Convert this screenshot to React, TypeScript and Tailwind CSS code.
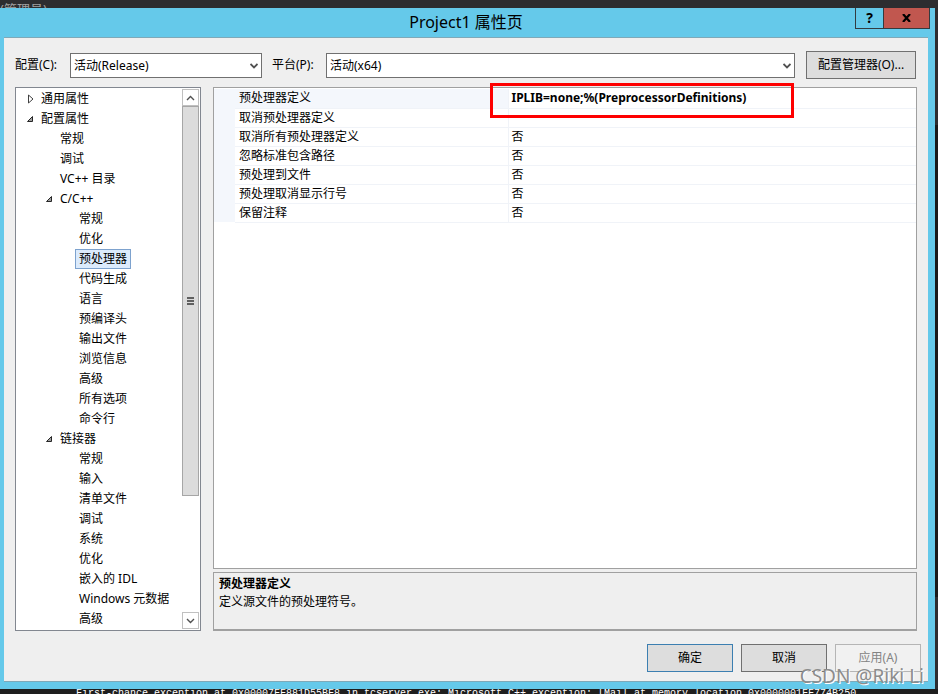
import { useState } from "react";

type Node = { label: string; level: number; state?: "open" | "closed" };

const tree: Node[] = [
  { label: "通用属性", level: 0, state: "closed" },
  { label: "配置属性", level: 0, state: "open" },
  { label: "常规", level: 1 },
  { label: "调试", level: 1 },
  { label: "VC++ 目录", level: 1 },
  { label: "C/C++", level: 1, state: "open" },
  { label: "常规", level: 2 },
  { label: "优化", level: 2 },
  { label: "预处理器", level: 2 },
  { label: "代码生成", level: 2 },
  { label: "语言", level: 2 },
  { label: "预编译头", level: 2 },
  { label: "输出文件", level: 2 },
  { label: "浏览信息", level: 2 },
  { label: "高级", level: 2 },
  { label: "所有选项", level: 2 },
  { label: "命令行", level: 2 },
  { label: "链接器", level: 1, state: "open" },
  { label: "常规", level: 2 },
  { label: "输入", level: 2 },
  { label: "清单文件", level: 2 },
  { label: "调试", level: 2 },
  { label: "系统", level: 2 },
  { label: "优化", level: 2 },
  { label: "嵌入的 IDL", level: 2 },
  { label: "Windows 元数据", level: 2 },
  { label: "高级", level: 2 },
];

const indent = ["pl-[6px]", "pl-[25px]", "pl-[44px]"];

const properties = [
  { name: "预处理器定义", value: "IPLIB=none;%(PreprocessorDefinitions)" },
  { name: "取消预处理器定义", value: "" },
  { name: "取消所有预处理器定义", value: "否" },
  { name: "忽略标准包含路径", value: "否" },
  { name: "预处理到文件", value: "否" },
  { name: "预处理取消显示行号", value: "否" },
  { name: "保留注释", value: "否" },
];

function Twisty({ state }: { state?: "open" | "closed" }) {
  return (
    <svg width="14" height="10" viewBox="0 0 14 10" className="shrink-0">
      {state === "closed" && <path d="M5.500 1v8l4.500-4z" fill="#fff" stroke="#404040" />}
      {state === "open" && <path d="M9.500 2.500v5h-5z" fill="#a0a0a0" stroke="#262626" />}
    </svg>
  );
}

function Select({ id, options, className }: { id: string; options: string[]; className: string }) {
  return (
    <div className={`relative h-[25px] ${className}`}>
      <select id={id} className="h-full w-full appearance-none border border-[#707070] bg-white pt-px pl-[3px]">
        {options.map((o) => (
          <option key={o}>{o}</option>
        ))}
      </select>
      <svg width="8" height="6" viewBox="0 0 8 6" className="pointer-events-none absolute top-[10px] right-1">
        <path d="M.5 1 4 4.500 7.500 1" fill="none" stroke="#505050" strokeWidth="1.800" />
      </svg>
    </div>
  );
}

function ScrollBar() {
  return (
    <div className="flex w-[17px] shrink-0 flex-col bg-white">
      <button aria-label="向上滚动" className="flex h-[17px] items-center justify-center border border-[#c0c0c0]">
        <svg width="9" height="6" viewBox="0 0 9 6">
          <path d="M1 5l3.500-3.500L8 5" fill="none" stroke="#505050" strokeWidth="1.400" />
        </svg>
      </button>
      <div className="flex-1">
        <div className="flex h-[77%] flex-col items-center justify-center gap-px border border-[#a6a6a6] bg-[#dcdcdc]">
          <div className="h-[2px] w-[7px] bg-[#606060]" />
          <div className="h-[2px] w-[7px] bg-[#606060]" />
          <div className="h-[2px] w-[7px] bg-[#606060]" />
        </div>
      </div>
      <button aria-label="向下滚动" className="flex h-[17px] items-center justify-center border border-[#c0c0c0]">
        <svg width="9" height="6" viewBox="0 0 9 6">
          <path d="M1 1l3.500 3.500L8 1" fill="none" stroke="#505050" strokeWidth="1.400" />
        </svg>
      </button>
    </div>
  );
}

export default function App() {
  const [selected, setSelected] = useState(8);

  return (
    <div className="relative flex h-screen flex-col overflow-hidden bg-[#2d2d30] font-['Noto_Sans','Noto_Sans_CJK_SC',sans-serif] text-[12px] leading-[18px] text-black">
      <div className="h-2 shrink-0 overflow-hidden text-[13px] text-[#a0a0a0]">(管理员)</div>

      <div className="flex min-h-0 flex-1">
        <div className="flex min-w-0 flex-1 flex-col bg-[#65c9ea] pr-[7px] pb-[7px] pl-1">
          <header className="relative h-[29px] shrink-0 text-center">
            <h1 className="text-[16px] leading-[28px]">Project1 属性页</h1>
            <div className="absolute top-0 -right-[2px] flex h-[21px] border border-t-0 border-[#333b40]">
              <button aria-label="帮助" className="w-[27px] text-[14px] leading-5 font-bold">?</button>
              <button aria-label="关闭" className="flex w-[46px] items-center justify-center border-l border-[#333b40] bg-[#c1574f]">
                <svg width="9" height="8" viewBox="0 0 9 8">
                  <path d="M1 0l7 8M8 0L1 8" stroke="#000" strokeWidth="2.200" />
                </svg>
              </button>
            </div>
          </header>

          <main className="flex min-h-0 flex-1 flex-col border-y border-[#7fa9b8] bg-[#efefef] px-[11px] pt-[13px] pb-[9px]">
            <div className="mr-px flex shrink-0 items-center">
              <label htmlFor="config" className="w-[55px] whitespace-nowrap">配置(C):</label>
              <Select id="config" options={["活动(Release)", "Debug", "Release"]} className="w-[192px]" />
              <label htmlFor="platform" className="ml-[10px] w-[54px] whitespace-nowrap">平台(P):</label>
              <Select id="platform" options={["活动(x64)", "Win32"]} className="flex-1" />
              <button className="ml-[11px] h-7 w-[110px] border border-[#707070] bg-[#dddddd]">配置管理器(O)...</button>
            </div>

            <div className="mt-2 flex min-h-0 flex-1 gap-3">
              <nav className="flex w-[186px] shrink-0 border border-[#828790] bg-white p-px">
                <ul className="min-w-0 flex-1 overflow-hidden">
                  {tree.map((node, i) => (
                    <li key={i} className={`flex h-5 items-center ${indent[node.level]}`}>
                      <Twisty state={node.state} />
                      <button
                        onClick={() => setSelected(i)}
                        className={`h-5 border px-[3px] whitespace-nowrap ${i === selected ? "border-[#7da2ce] bg-[#dcebfc]" : "border-transparent"}`}
                      >
                        {node.label}
                      </button>
                    </li>
                  ))}
                </ul>
                <ScrollBar />
              </nav>

              <div className="flex min-w-0 flex-1 flex-col gap-[3px]">
                <section className="flex-1 border border-[#a0a0a0] bg-white pt-px">
                  <table className="w-full table-fixed border-collapse">
                    <colgroup>
                      <col className="w-[21px]" />
                      <col className="w-[273px]" />
                      <col />
                    </colgroup>
                    <tbody>
                      {properties.map((p, i) => (
                        <tr key={p.name} className="h-[19px]">
                          <td className="bg-[#f4f7fc] p-0" />
                          <th scope="row" className={`border-b border-[#f0f3f8] p-0 pl-[4px] text-left font-normal ${i === 0 ? "bg-[#f4f7fc]" : ""}`}>
                            {p.name}
                          </th>
                          <td className={`relative border-b border-l border-[#f0f3f8] p-0 pl-[3px] ${i === 0 ? "font-bold" : ""}`}>
                            {p.value}
                            {i === 0 && <div className="pointer-events-none absolute -top-[6px] -left-[19px] h-[35px] w-[304px] border-3 border-[#fe0000]" />}
                          </td>
                        </tr>
                      ))}
                    </tbody>
                  </table>
                </section>
                <section className="h-[59px] shrink-0 border border-b-2 border-[#a0a0a0] px-[5px] pt-[2px]">
                  <h2 className="font-bold">预处理器定义</h2>
                  <p>定义源文件的预处理符号。</p>
                </section>
              </div>
            </div>

            <div className="-mr-1 mt-[13px] flex shrink-0 justify-end gap-2">
              <button className="h-7 w-[86px] border border-[#3c7fb1] bg-[#dddddd]">确定</button>
              <button className="h-7 w-[86px] border border-[#707070] bg-[#dddddd]">取消</button>
              <button disabled className="h-7 w-[86px] border border-[#b5b5b5] bg-[#f1f1f1] text-[#838383]">应用(A)</button>
            </div>
          </main>
        </div>

        {/* sliver of the editor behind the dialog */}
        <div className="flex w-[3px] shrink-0 flex-col bg-[#2d2d30] pt-[117px] pb-[92px]">
          <div className="flex-1 bg-[#1a1a1a]" />
        </div>
      </div>

      <div className="h-[5px] shrink-0 overflow-hidden bg-[#1e1e1e] pl-[76px] font-['Liberation_Mono',monospace] text-[10px] leading-[10px] whitespace-pre text-white">
        First-chance exception at 0x00007FF881D55BF8 in tcserver.exe: Microsoft C++ exception: [Mail at memory location 0x0000001FF774B250
      </div>

      <div className="pointer-events-none absolute right-[14px] bottom-[6px] text-[19px] leading-6 text-[#8c8c8c] [text-shadow:1px_1px_0_#ffffff]">
        CSDN @Riki Li
      </div>
    </div>
  );
}
